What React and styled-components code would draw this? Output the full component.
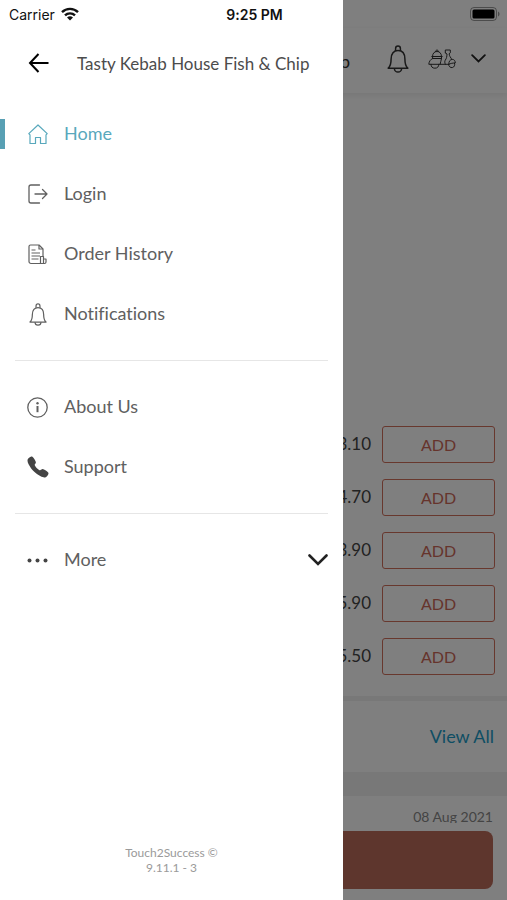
import React from 'react'
import styled, { createGlobalStyle } from 'styled-components'
import { IoCall } from 'react-icons/io5'

const GlobalStyle = createGlobalStyle`
  * {
    box-sizing: border-box;
  }

  body {
    margin: 0;
    background: #ffffff;
    font-family: Lato, 'Open Sans', sans-serif;
    font-variant-ligatures: none;
  }

  a {
    text-decoration: none;
  }

  button {
    padding: 0;
    border: none;
    background: none;
    font-family: inherit;
    cursor: pointer;
  }

  svg {
    display: block;
    flex-shrink: 0;
  }
`

const Screen = styled.div`
  position: relative;
  min-height: 100vh;
  overflow: hidden;
`

/* status bar */

const StatusBar = styled.div`
  position: absolute;
  top: 0;
  left: 0;
  right: 0;
  z-index: 4;
  display: grid;
  grid-template-columns: 1fr auto 1fr;
  align-items: center;
  height: 28px;
  padding: 0 7px 0 9px;
  color: #111111;
  font-family: Inter, sans-serif;
  font-size: 14px;
`

const Carrier = styled.div`
  display: flex;
  align-items: center;
  gap: 6px;
`

const Clock = styled.div`
  font-weight: 600;
`

const BatterySlot = styled.div`
  justify-self: end;
`

/* store page behind the drawer */

const Page = styled.main`
  display: flex;
  flex-direction: column;
  min-height: 100vh;
  padding-top: 28px;
`

const StoreHeader = styled.header`
  display: flex;
  align-items: center;
  justify-content: flex-end;
  height: 65px;
  padding: 0 21px 4px 60px;
  box-shadow: 0 2px 6px rgba(0, 0, 0, 0.08);
`

const StoreName = styled.span`
  height: 18px;
  margin-right: 37px;
  overflow: hidden;
  color: #333333;
  font-size: 18px;
  line-height: 22px;
  white-space: nowrap;
`

const HeaderButton = styled.button`
  display: flex;
  align-items: center;
  gap: 15px;
  margin-left: ${({ $space }) => $space || 0}px;
  color: #333333;
`

const ItemList = styled.ul`
  display: flex;
  flex-direction: column;
  gap: 16px;
  margin: 0;
  padding: 333px 12px 21px;
  list-style: none;
`

const Item = styled.li`
  display: flex;
  align-items: center;
  justify-content: flex-end;
  gap: 11px;
`

const Price = styled.span`
  padding-bottom: 3px;
  color: #444444;
  font-size: 17px;
`

const AddButton = styled.button`
  width: 113px;
  height: 37px;
  border: 1px solid #d0705c;
  border-radius: 3px;
  color: #cc6858;
  font-size: 16px;
`

const Band = styled.div`
  height: ${({ $height }) => $height}px;
  background: #f0f0f0;
`

const ViewAllRow = styled.div`
  display: flex;
  align-items: center;
  justify-content: flex-end;
  height: 71px;
  padding: 0 13px 2px;
`

const ViewAll = styled.a`
  color: #1c9cc8;
  font-size: 18px;
`

const Review = styled.section`
  display: flex;
  flex-direction: column;
  padding: 12px 14px 10px;
`

const ReviewDate = styled.time`
  align-self: flex-end;
  height: 15px;
  overflow: hidden;
  color: #888888;
  font-size: 14px;
  line-height: 18px;
`

const BasketButton = styled.button`
  height: 58px;
  margin-top: 8px;
  border-radius: 8px;
  background: #bc6c5a;
`

/* drawer */

const Scrim = styled.div`
  position: absolute;
  inset: 0;
  z-index: 2;
  background: rgba(0, 0, 0, 0.5);
`

const Drawer = styled.aside`
  position: absolute;
  top: 0;
  bottom: 0;
  left: 0;
  z-index: 3;
  display: flex;
  flex-direction: column;
  width: calc(100% - 164px);
  padding-top: 28px;
  background: #ffffff;
`

const DrawerHeader = styled.div`
  display: flex;
  align-items: center;
  gap: 28px;
  height: 70px;
  padding-left: 28px;
`

const DrawerTitle = styled.h1`
  margin: 0;
  color: #4c4c4c;
  font-size: 17px;
  font-weight: 400;
  white-space: nowrap;
`

const Nav = styled.nav`
  flex: 1;
  padding-top: 6px;
`

const Divider = styled.hr`
  height: 1px;
  margin: 16px 15px;
  border: none;
  background: #e6e6e6;
`

const NavRow = styled.a`
  display: flex;
  align-items: center;
  width: 100%;
  height: 60px;
  padding-right: 15px;
  color: ${({ $active }) => ($active ? '#58a8bc' : '#606060')};
  font-size: 18px;

  &::before {
    content: '';
    width: 5px;
    height: 30px;
    background: ${({ $active }) => ($active ? '#58a0b4' : 'transparent')};
  }
`

const NavIcon = styled.span`
  display: flex;
  justify-content: center;
  width: 23px;
  margin: 0 15px 0 21px;
`

const NavLabel = styled.span`
  flex: 1;
  padding-bottom: 2px;
  text-align: left;
`

const DrawerFooter = styled.footer`
  padding-bottom: 25px;
  color: #9a9a9a;
  font-size: 12px;
  line-height: 15px;
  text-align: center;
`

function WifiIcon() {
  return (
    <svg width="18" height="14" viewBox="0 0 18 14" fill="none" stroke="currentColor" strokeWidth="2.4">
      <path d="M1 5.2a11.4 11.4 0 0 1 16 0" />
      <path d="M4 8.4a7.1 7.1 0 0 1 10 0" />
      <path d="M9 13.6 6 10.6a4.3 4.3 0 0 1 6 0z" fill="currentColor" stroke="none" />
    </svg>
  )
}

function BatteryIcon() {
  return (
    <svg width="30" height="14" viewBox="0 0 30 14">
      <rect x="0.5" y="0.5" width="26" height="13" rx="3.5" fill="none" stroke="#000" strokeOpacity="0.4" />
      <rect x="2.5" y="2.5" width="22" height="9" rx="1.5" fill="#000" />
      <path d="M28 4.5c2 .7 2 4.3 0 5z" fill="#000" fillOpacity="0.4" />
    </svg>
  )
}

function BellIcon({ width, height, stroke }) {
  return (
    <svg width={width} height={height} viewBox="0 0 22 28" fill="none" stroke="currentColor" strokeWidth={stroke} strokeLinejoin="round">
      <path d="M1.2 23.2c2.4-2 2.900-4 2.900-9.200C4.100 8.600 6.800 5.500 11 5.500s6.900 3.100 6.900 8.500c0 5.200.5 7.200 2.900 9.200z" />
      <path d="M8.600 5.900V3.500a2.400 2.400 0 0 1 4.800 0v2.400" />
      <path d="M7.400 23.400a3.600 3.600 0 0 0 7.200 0" />
    </svg>
  )
}

function ScooterIcon() {
  return (
    <svg width="28" height="20" viewBox="0 0 28 20" fill="none" stroke="currentColor" strokeWidth="1" strokeLinejoin="round" strokeLinecap="round">
      <path d="M4.500 7.500c0-3.200 1.900-5 4.500-5s4.500 1.800 4.500 5M7.500 2.500c0-2 3-2 3 0" />
      <path d="M3.800 7.500h10.400M4.600 7.500v2h8.900v-2" />
      <path d="M4.600 9.500C2.500 10.400 1 12.500.8 15.300h11.400c.2-1.800.8-3.200 1.300-5.800" />
      <path d="M3 15.300a3.900 3.900 0 0 0 7.800 0" />
      <path d="M12.200 15.300h8.600" />
      <path d="M17.300 3.800V1h5v2.800l-1.200 1c.2 2 1.500 3.800 2.800 5.600" />
      <path d="M17.300 3.800 19 5c-.2 2.800-.3 4.200-1.800 6.300-.6 1-.6 2.500.2 4" />
      <path d="M20.800 15.300c-.2-3 1.400-4.900 3.600-4.900 1.900 0 2.900 1.600 2.900 3.600-2.500 0-4.600.3-6.500 1.300z" />
      <path d="M20.600 15.500a3.100 3.100 0 1 0 5.900-1.300" />
    </svg>
  )
}

function ChevronIcon({ width, stroke }) {
  return (
    <svg width={width} height={(width * 12) / 20} viewBox="0 0 20 12" fill="none" stroke="#222" strokeWidth={stroke} strokeLinecap="round">
      <path d="m1.500 1.500 8.500 8.500 8.500-8.500" />
    </svg>
  )
}

function BackIcon() {
  return (
    <svg width="21" height="20" viewBox="0 0 21 20" fill="none" stroke="#000" strokeWidth="2">
      <path d="M10.500 1 2 10l8.500 9M2 10h18.500" />
    </svg>
  )
}

function HomeIcon() {
  return (
    <svg width="20" height="21" viewBox="0 0 20 21" fill="none" stroke="currentColor" strokeWidth="1.200" strokeLinejoin="round">
      <path d="M.8 9.600 10 1l9.200 8.600-1.200 1.300v8.600h-5.500v-6h-5v6H2v-8.600z" />
    </svg>
  )
}

function LoginIcon() {
  return (
    <svg width="20" height="20" viewBox="0 0 20 20" fill="none" stroke="currentColor" strokeWidth="1.300" strokeLinecap="round" strokeLinejoin="round">
      <path d="M11.500 1H3a2 2 0 0 0-2 2v14a2 2 0 0 0 2 2h8.500" />
      <path d="M7 10h12M14.500 5.500 19 10l-4.500 4.500" />
    </svg>
  )
}

function OrderIcon() {
  return (
    <svg width="19" height="21" viewBox="0 0 19 21" fill="none" stroke="currentColor" strokeWidth="1.200" strokeLinejoin="round">
      <path d="M12.500 19.500H3a2 2 0 0 1-2-2v-15A1.500 1.500 0 0 1 2.500 1H11l4 4v7.500" />
      <path d="M11 1v4h4M3.500 6h4M3.500 9h8.500M3.500 12h8.500M3.500 15h7" />
      <path d="M12.500 19.500v-7h3v7zM15.500 15h2.500v3a1.500 1.500 0 0 1-1.500 1.500h-4" />
    </svg>
  )
}

function InfoIcon() {
  return (
    <svg width="21" height="21" viewBox="0 0 21 21" fill="none" stroke="currentColor">
      <circle cx="10.500" cy="10.500" r="9.700" strokeWidth="1.300" />
      <path d="M10.500 9v6.200" strokeWidth="2" />
      <circle cx="10.500" cy="6.300" r="1.200" fill="currentColor" stroke="none" />
    </svg>
  )
}

function DotsIcon() {
  return (
    <svg width="21" height="5" viewBox="0 0 21 5" fill="#444">
      <circle cx="2.500" cy="2.500" r="2" />
      <circle cx="10.500" cy="2.500" r="2" />
      <circle cx="18.500" cy="2.500" r="2" />
    </svg>
  )
}

const prices = ['£3.10', '£4.70', '£3.90', '£5.90', '£5.50']

const accountLinks = [
  { label: 'Home', href: '#home', icon: <HomeIcon />, active: true },
  { label: 'Login', href: '#login', icon: <LoginIcon /> },
  { label: 'Order History', href: '#orders', icon: <OrderIcon /> },
  { label: 'Notifications', href: '#notifications', icon: <BellIcon width={18} height={23} stroke={1.5} /> }
]

const helpLinks = [
  { label: 'About Us', href: '#about', icon: <InfoIcon /> },
  { label: 'Support', href: '#support', icon: <IoCall size={24} color="#444" /> }
]

function NavLinks({ links }) {
  return links.map(({ label, href, icon, active }) => (
    <NavRow key={label} href={href} $active={active}>
      <NavIcon>{icon}</NavIcon>
      <NavLabel>{label}</NavLabel>
    </NavRow>
  ))
}

export default function App() {
  return (
    <Screen>
      <GlobalStyle />
      <StatusBar>
        <Carrier>
          Carrier
          <WifiIcon />
        </Carrier>
        <Clock>9:25 PM</Clock>
        <BatterySlot>
          <BatteryIcon />
        </BatterySlot>
      </StatusBar>

      <Page>
        <StoreHeader>
          <StoreName>Tasty Kebab House Fish &amp; Chip</StoreName>
          <HeaderButton aria-label="Notifications">
            <BellIcon width={22} height={28} stroke={1.5} />
          </HeaderButton>
          <HeaderButton aria-label="Order type" $space={19}>
            <ScooterIcon />
            <ChevronIcon width={15} stroke={2.4} />
          </HeaderButton>
        </StoreHeader>
        <ItemList>
          {prices.map(price => (
            <Item key={price}>
              <Price>{price}</Price>
              <AddButton>ADD</AddButton>
            </Item>
          ))}
        </ItemList>
        <Band $height={5} />
        <ViewAllRow>
          <ViewAll href="#reviews">View All</ViewAll>
        </ViewAllRow>
        <Band $height={24} />
        <Review>
          <ReviewDate dateTime="2021-08-08">08 Aug 2021</ReviewDate>
          <BasketButton aria-label="View basket" />
        </Review>
      </Page>

      <Scrim />

      <Drawer>
        <DrawerHeader>
          <button aria-label="Close menu">
            <BackIcon />
          </button>
          <DrawerTitle>Tasty Kebab House Fish &amp; Chip</DrawerTitle>
        </DrawerHeader>
        <Nav>
          <NavLinks links={accountLinks} />
          <Divider />
          <NavLinks links={helpLinks} />
          <Divider />
          <NavRow as="button" aria-expanded="false">
            <NavIcon>
              <DotsIcon />
            </NavIcon>
            <NavLabel>More</NavLabel>
            <ChevronIcon width={20} stroke={2.6} />
          </NavRow>
        </Nav>
        <DrawerFooter>
          Touch2Success ©<br />
          9.11.1 - 3
        </DrawerFooter>
      </Drawer>
    </Screen>
  )
}
